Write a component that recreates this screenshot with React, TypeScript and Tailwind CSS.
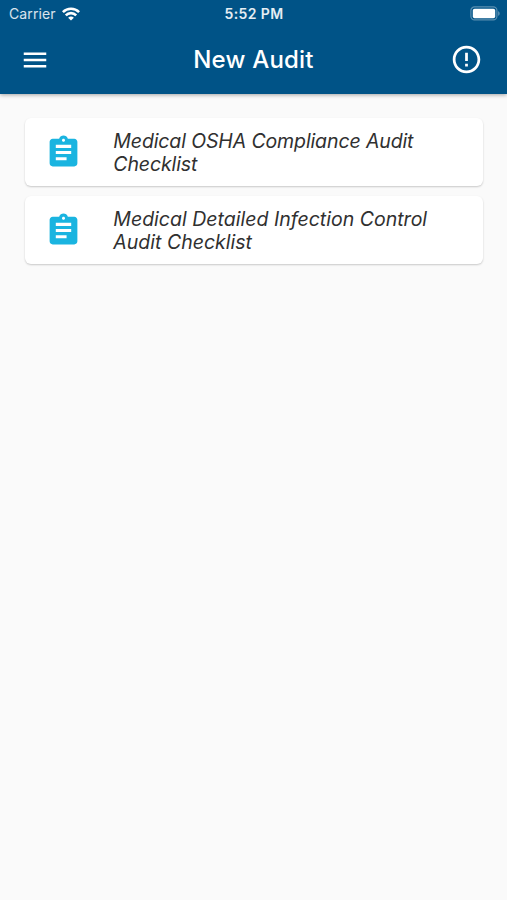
import React from 'react';
import { MdAssignment, MdErrorOutline, MdMenu } from 'react-icons/md';

interface Checklist {
  id: number;
  lines: string[];
  spacing: string;
}

const checklists: Checklist[] = [
  { id: 1, lines: ['Medical OSHA Compliance Audit', 'Checklist'], spacing: 'tracking-[-0.12px]' },
  { id: 2, lines: ['Medical Detailed Infection Control', 'Audit Checklist'], spacing: 'tracking-[0.01px]' },
];

const WifiIcon: React.FC = () => (
  <svg viewBox="0 0 18 14" className="w-[18px] h-[14px]" fill="none" stroke="currentColor" strokeWidth="2.6">
    <path d="M0.9 5.1a11.6 11.6 0 0 1 16.2 0" />
    <path d="M3.8 8.3a7.4 7.4 0 0 1 10.4 0" />
    <path d="M9 13.6 6.1 10.8a4.2 4.2 0 0 1 5.8 0z" fill="currentColor" stroke="none" />
  </svg>
);

const BatteryIcon: React.FC = () => (
  <svg viewBox="0 0 31 15" className="w-[31px] h-[15px]" fill="none">
    <rect x="0.9" y="0.9" width="26" height="13" rx="3.6" stroke="#fff" strokeOpacity="0.35" strokeWidth="1.2" />
    <rect x="2.8" y="2.8" width="22.4" height="9.4" rx="1.8" fill="#fff" />
    <path d="M28.2 5.2c1.9 .6 1.9 4 0 4.6z" fill="#fff" fillOpacity="0.4" />
  </svg>
);

const StatusBar: React.FC = () => (
  <div className="grid grid-cols-3 items-center h-[27px] pl-[7px] pr-[6px]">
    <div className="flex items-center gap-[6px] pl-[2px]">
      <span className="text-[14px] leading-none tracking-[0.1px] text-white/85">Carrier</span>
      <WifiIcon />
    </div>
    <span className="pt-px text-center text-[14px] leading-none font-semibold tracking-[0.4px] text-white/90">5:52 PM</span>
    <div className="flex justify-end">
      <BatteryIcon />
    </div>
  </div>
);

const ChecklistCard: React.FC<{ checklist: Checklist }> = ({ checklist }) => {
  return (
    <div className="flex items-center h-[68px] pl-[19.5px] bg-white rounded-[6px] shadow-[0_1px_2px_rgba(0,0,0,0.2)]">
      <MdAssignment className="size-[37px] shrink-0 text-[#1ab4e0]" />
      <p className={`ml-[31.5px] pt-[1px] text-[19.5px] leading-[23px] italic whitespace-nowrap text-[#303030] ${checklist.spacing}`}>
        {checklist.lines.map((line) => (
          <span key={line} className="block">{line}</span>
        ))}
      </p>
    </div>
  );
};

const App: React.FC = () => {
  return (
    <div className="w-full h-screen bg-[#fafafa] font-['Inter',sans-serif]">
      <header className="h-[94px] bg-[#005387] text-white shadow-[0_1px_4px_rgba(0,0,0,0.35)]">
        <StatusBar />
        <div className="grid grid-cols-[1fr_auto_1fr] items-center h-[65px] pl-[20px] pr-[24px]">
          <MdMenu className="size-[30px]" />
          <h1 className="pl-[4px] text-[24px] font-medium leading-none tracking-[0.2px]">New Audit</h1>
          <MdErrorOutline className="size-[33px] justify-self-end" />
        </div>
      </header>
      <main className="flex flex-col gap-[10px] pl-[25.3px] pr-[24.3px] pt-[24.4px]">
        {checklists.map((checklist) => (
          <ChecklistCard key={checklist.id} checklist={checklist} />
        ))}
      </main>
    </div>
  );
};

export default App;
